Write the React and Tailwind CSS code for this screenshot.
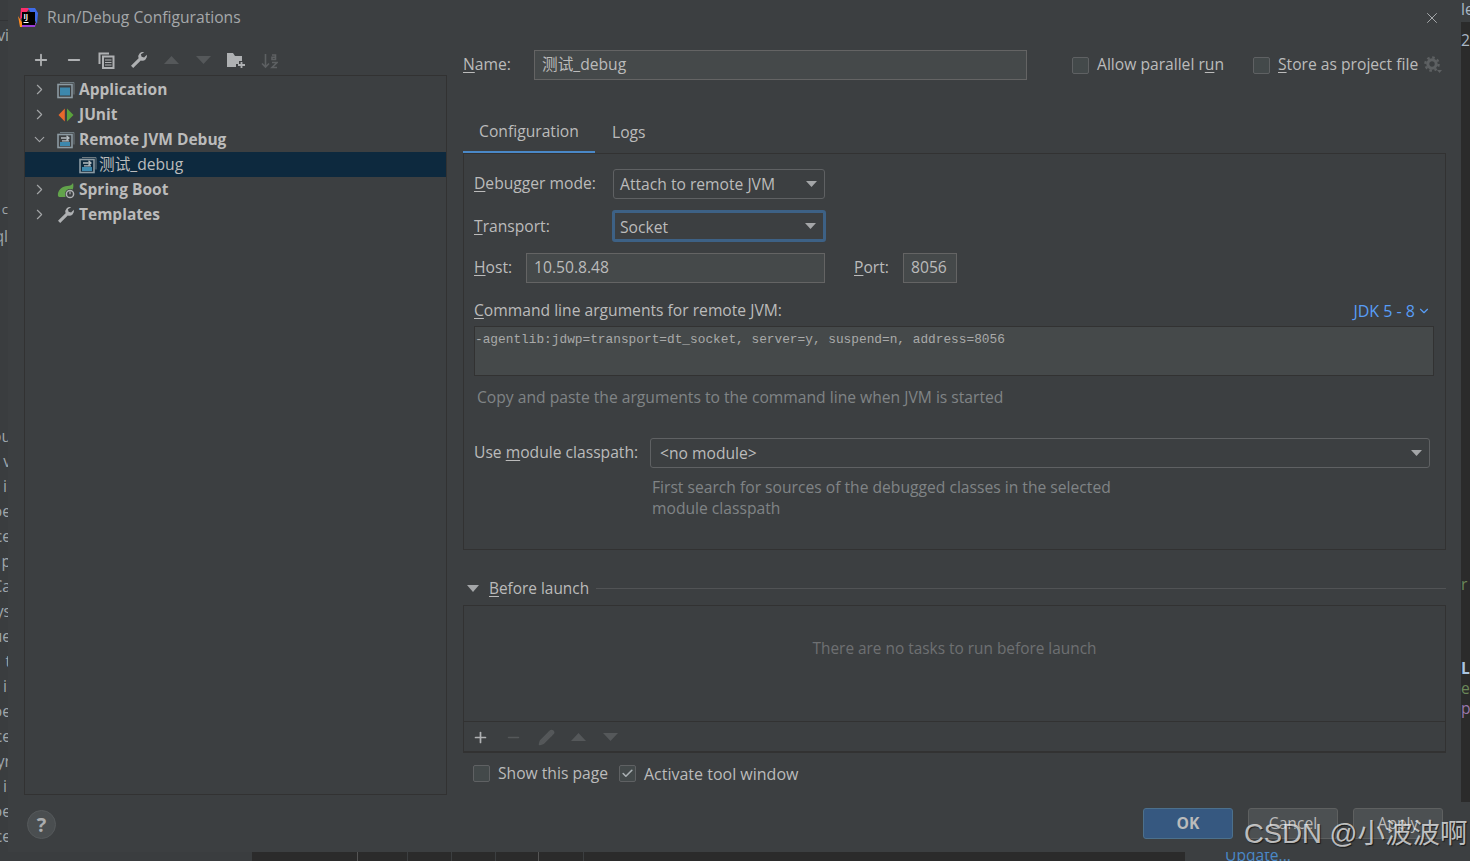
import { Plus, Minus, ChevronRight, ChevronDown, X, Check, Pencil } from 'lucide-react'

const ui = { fontFamily: '"Open Sans", "Noto Sans CJK SC", sans-serif' }

const tree = [
  { name: 'Application', icon: 'app', arrow: 'right' },
  { name: 'JUnit', icon: 'junit', arrow: 'right' },
  { name: 'Remote JVM Debug', icon: 'remote', arrow: 'down' },
  { name: '测试_debug', icon: 'remote', child: true },
  { name: 'Spring Boot', icon: 'spring', arrow: 'right' },
  { name: 'Templates', icon: 'wrench', arrow: 'right' },
]

const leftLines = ['ou', 'v', 'ii', 'oe', 'ce', 'p', 'Ca', 'ys', 'ue', 't', 'ii', 'oe', 'ce', 'yr', 'ii', 'oe', 'ce']

function Mn({ children }) {
  return <span className="underline underline-offset-2">{children}</span>
}

function WrenchIcon({ size = 18 }) {
  return (
    <svg width={size} height={size} viewBox="0 0 18 18">
      <path d="M14.200 1.200a4.600 4.600 0 0 0-5.600 6L1 14.800 3.200 17l7.600-7.600a4.600 4.600 0 0 0 6-5.600l-2.700 2.700-2.500-.7-.7-2.500z" fill="#afb1b3" />
    </svg>
  )
}

function GearIcon() {
  return (
    <svg width="18" height="18" viewBox="0 0 18 18" fill="none" stroke="#5d6062">
      <circle cx="8" cy="8" r="4.200" strokeWidth="3" />
      <circle cx="8" cy="8" r="6.600" strokeWidth="2.400" strokeDasharray="2.600 2.580" />
      <path d="M13 14h5l-2.500 3z" fill="#5d6062" stroke="none" />
    </svg>
  )
}

function TreeIcon({ type }) {
  if (type === 'app') {
    return (
      <svg width="18" height="18" viewBox="0 0 18 18">
        <path d="M3 1.500h14v12" fill="none" stroke="#6e7a80" strokeWidth="1" />
        <rect x="1" y="3.500" width="14" height="13" fill="none" stroke="#8c9aa2" strokeWidth="1.600" />
        <rect x="3" y="6.500" width="10" height="8" fill="#3d88ad" />
      </svg>
    )
  }
  if (type === 'junit') {
    return (
      <svg width="18" height="18" viewBox="0 0 18 18">
        <path d="M7.800 2.500v13L1.500 9z" fill="#e8692c" />
        <path d="M10 2.500v13L16.500 9z" fill="#5aa23c" />
      </svg>
    )
  }
  if (type === 'remote') {
    return (
      <svg width="18" height="18" viewBox="0 0 18 18">
        <path d="M3 1.500h14v12" fill="none" stroke="#6e7a80" strokeWidth="1" />
        <rect x="1" y="3.500" width="14" height="13" fill="none" stroke="#8c9aa2" strokeWidth="1.600" />
        <rect x="3" y="11" width="10" height="4" fill="#3d88ad" />
        <path d="M4 7h8M9.500 4.800l2.500 2.200-2.500 2.200M12 9.800H5" fill="none" stroke="#b4bcc0" strokeWidth="1.300" />
      </svg>
    )
  }
  if (type === 'spring') {
    return (
      <svg width="19" height="18" viewBox="0 0 19 18">
        <path d="M1 15c-1-6 5-10 9-10 3 0 5-1 6-3 1 4 0 7-2 8l-6 6H2z" fill="#62a34b" />
        <circle cx="13" cy="13" r="5" fill="#3c3f41" />
        <circle cx="13" cy="13" r="3.600" fill="none" stroke="#afb1b3" strokeWidth="1.500" />
        <path d="M13 10.500v2.700" stroke="#afb1b3" strokeWidth="1.200" />
      </svg>
    )
  }
  return <WrenchIcon />
}

function TreeRow({ item }) {
  return (
    <div className={`h-[25px] flex items-center ${item.child ? 'bg-[#0d293e] pl-[54px]' : 'pl-[6px]'}`}>
      {!item.child && (
        <span className="w-[26px] shrink-0 text-[#a4a6a8]">
          {item.arrow === 'down' ? <ChevronDown size={17} strokeWidth={1.6} /> : <ChevronRight size={17} strokeWidth={1.6} />}
        </span>
      )}
      <span className="w-[22px] shrink-0 flex items-center"><TreeIcon type={item.icon} /></span>
      <span className={`text-[#bbbbbb] whitespace-nowrap ${item.child ? 'text-[15.65px] -ml-[2px]' : 'text-[15.5px] font-bold'}`}>{item.name}</span>
    </div>
  )
}

function TopToolbar() {
  return (
    <div className="h-[30px] flex items-center text-[#afb1b3]">
      <span className="w-[33px] flex justify-center"><Plus size={18} strokeWidth={2.4} /></span>
      <span className="w-[33px] flex justify-center"><Minus size={18} strokeWidth={2.4} /></span>
      <span className="w-[32px] flex justify-center">
        <svg width="17" height="17" viewBox="0 0 17 17" fill="none" stroke="#afb1b3">
          <path d="M1.500 12V1.500H11" strokeWidth="2" />
          <rect x="5" y="4.500" width="10.500" height="11.500" strokeWidth="2" />
          <path d="M7 8h6.500M7 10.500h6.500M7 13h6.500" strokeWidth="1.200" />
        </svg>
      </span>
      <span className="w-[33px] flex justify-center"><WrenchIcon /></span>
      <span className="w-[32px] flex justify-center"><svg width="15" height="8" viewBox="0 0 15 8"><path d="M0 8L7.500 0 15 8z" fill="#55585a" /></svg></span>
      <span className="w-[33px] flex justify-center"><svg width="15" height="8" viewBox="0 0 15 8"><path d="M0 0l7.500 8L15 0z" fill="#55585a" /></svg></span>
      <span className="w-[33px] flex justify-center">
        <svg width="19" height="16" viewBox="0 0 19 16">
          <path d="M0 1h6l2 3h7v5h-3v3H9v3H0z" fill="#afb1b3" />
          <path d="M11 13h7M14.500 10v6" stroke="#afb1b3" strokeWidth="1.800" />
        </svg>
      </span>
      <span className="w-[32px] flex justify-center">
        <svg width="17" height="17" viewBox="0 0 17 17" fill="none" stroke="#5d6062" strokeWidth="1.600">
          <path d="M4.500 2v13M1 11.500l3.500 3.500L8 11.500" />
          <path d="M11 3h3.500v4.500H11V5.300h3.500M11 10.500h5l-5 5h5" />
        </svg>
      </span>
    </div>
  )
}

function Checkbox({ checked }) {
  return (
    <span className="w-[17px] h-[17px] shrink-0 rounded-[2px] border border-[#5f6163] bg-[#43494a] flex items-center justify-center">
      {checked && <Check size={13} strokeWidth={3} className="text-[#a9b0b3]" />}
    </span>
  )
}

function Combo({ text, focus, pad, className }) {
  return (
    <div className={`flex items-center justify-between rounded-[3px] bg-[#3c3f41] ${focus ? 'border-[3px] border-[#3d6185] pl-[5px] pr-[7px] h-[32px]' : 'border border-[#5f6163] pl-[6px] pr-[7px] h-[30px]'} ${className}`}>
      <span className={`text-[15.65px] text-[#bbbbbb] whitespace-nowrap ${focus ? 'pt-[3px]' : 'pt-[1px]'} ${pad ? 'ml-[3px]' : ''}`}>{text}</span>
      <svg width="11" height="6" viewBox="0 0 11 6"><path d="M0 0h11L5.500 6z" fill="#a4a6a8" /></svg>
    </div>
  )
}

function Field({ children, className }) {
  return (
    <div className={`h-[30px] flex items-center bg-[#45494a] border border-[#646464] pl-[7px] text-[15.65px] text-[#bbbbbb] whitespace-nowrap ${className}`}>{children}</div>
  )
}

function Btn({ children, primary }) {
  return (
    <div className={`w-[90px] h-[31px] rounded-[3px] flex items-center justify-center pt-[1px] text-[15.65px] ${primary ? 'bg-[#365880] border border-[#4c708c] font-bold text-[#bbbbbb]' : 'bg-[#4c5052] border border-[#5e6060] text-[#bbbbbb]'}`}>
      {children}
    </div>
  )
}

export default function App() {
  return (
    <div className="relative w-[1470px] h-[861px] overflow-hidden bg-[#2b2b2b] flex flex-col" style={ui}>
      <div className="flex h-[852px]">
        <div className="w-[8px] shrink-0 overflow-hidden bg-[#3a3d3f] text-[15.65px] text-[#9fa6ab] flex flex-col items-end">
          <div className="h-[21px] shrink-0 border-b border-[#323436] w-full" />
          <div className="h-[20px] shrink-0 leading-[20px] mt-[4px] -mr-[1px]">vi</div>
          <div className="mt-[155px] h-[20px] shrink-0 text-[13px]">c</div>
          <div className="h-[20px] mt-[5px] shrink-0">ql</div>
          <div className="mt-[179px] flex flex-col items-end -mr-[3px]">
            {leftLines.map((t, i) => <div key={i} className="h-[25px] shrink-0 leading-[25px]">{t}</div>)}
          </div>
        </div>

        <div className="w-[1453px] shrink-0 bg-[#3c3f41] flex flex-col">
          <div className="h-[35px] shrink-0 flex items-center pl-[10px] pr-[20px]">
            <svg width="20" height="20" viewBox="0 0 20 20" className="shrink-0">
              <path d="M3 0h9L2 12z" fill="#fc2d6c" />
              <path d="M10 0h7l3 5-1 11z" fill="#3e6be8" />
              <path d="M0 8l7 11H2z" fill="#ff8a1f" />
              <path d="M4 19h13l1-4H4z" fill="#9a3dd8" />
              <rect x="4" y="4" width="13" height="13" fill="#000" />
              <rect x="5.500" y="14" width="5" height="1" fill="#fff" />
              <text x="5.500" y="11" fontSize="7" fontWeight="700" fill="#fff">IJ</text>
            </svg>
            <span className="ml-[9px] pt-[1px] text-[15.65px] text-[#a5a8aa]">Run/Debug Configurations</span>
            <X size={18} strokeWidth={1.3} className="ml-auto text-[#a9acae]" />
          </div>

          <div className="flex-1 flex">
            <div className="w-[440px] shrink-0 pl-[16px] flex flex-col">
              <div className="h-[10px]" />
              <TopToolbar />
              <div className="w-[423px] h-[720px] border border-[#323232] pt-[1px]">
                {tree.map(item => <TreeRow key={item.name} item={item} />)}
              </div>
              <div className="mt-[15px] ml-[3px] w-[29px] h-[29px] rounded-full bg-[#4a4e50] border border-[#55595b] flex items-center justify-center text-[20px] font-bold text-[#a9acae]">?</div>
            </div>

            <div className="ml-[15px] w-[983px] flex flex-col text-[15.65px] text-[#bbbbbb]">
              <div className="h-[30px] mt-[15px] flex items-center">
                <span className="w-[71px]"><Mn>N</Mn>ame:</span>
                <Field className="w-[493px]">测试_debug</Field>
                <span className="ml-[45px]"><Checkbox /></span>
                <span className="ml-[8px] whitespace-nowrap">Allow parallel r<Mn>u</Mn>n</span>
                <span className="ml-[29px]"><Checkbox /></span>
                <span className="ml-[8px] whitespace-nowrap"><Mn>S</Mn>tore as project file</span>
                <span className="ml-[6px] w-[18px] h-[18px] shrink-0"><GearIcon /></span>
              </div>

              <div className="mt-[36px] h-[38px] flex">
                <div className="w-[132px] h-[38px] border-b-[3px] border-[#4a88c7] flex items-center justify-center pb-[3px]">Configuration</div>
                <div className="ml-[17px] h-[36px] flex items-center pb-[3px]">Logs</div>
              </div>

              <div className="h-[397px] border border-[#323232] pl-[10px] pr-[11px] pt-[15px] -mt-[1px]">
                <div className="flex items-center h-[30px]">
                  <span className="w-[139px]"><Mn>D</Mn>ebugger mode:</span>
                  <Combo text="Attach to remote JVM" className="w-[212px]" />
                </div>
                <div className="flex items-center h-[32px] mt-[11px]">
                  <span className="w-[138px] pt-[1px]"><Mn>T</Mn>ransport:</span>
                  <Combo text="Socket" focus className="w-[214px]" />
                </div>
                <div className="flex items-center h-[30px] mt-[11px]">
                  <span className="w-[52px]"><Mn>H</Mn>ost:</span>
                  <Field className="w-[299px]">10.50.8.48</Field>
                  <span className="ml-[29px] w-[49px]"><Mn>P</Mn>ort:</span>
                  <Field className="w-[54px]">8056</Field>
                </div>
                <div className="flex items-center justify-between h-[20px] mt-[18px]">
                  <span><Mn>C</Mn>ommand line arguments for remote JVM:</span>
                  <span className="flex items-center text-[16px] text-[#589df6] mr-[3px]">JDK 5 - 8<ChevronDown size={14} className="ml-[2px]" /></span>
                </div>
                <div className="h-[50px] mt-[5px] bg-[#45494a] border border-[#323232] text-[12.8px] leading-[26px] text-[#a9a9a9] whitespace-nowrap" style={{ fontFamily: '"Liberation Mono", monospace' }}>
                  -agentlib:jdwp=transport=dt_socket, server=y, suspend=n, address=8056
                </div>
                <div className="mt-[10px] h-[20px] ml-[3px] text-[#808486]">Copy and paste the arguments to the command line when JVM is started</div>
                <div className="flex items-center h-[30px] mt-[32px]">
                  <span className="w-[176px] whitespace-nowrap">Use <Mn>m</Mn>odule classpath:</span>
                  <Combo text="<no module>" pad className="w-[780px]" />
                </div>
                <div className="mt-[9px] ml-[178px] leading-[21px] text-[#808486]">
                  <div>First search for sources of the debugged classes in the selected</div>
                  <div>module classpath</div>
                </div>
              </div>

              <div className="mt-[28px] h-[20px] flex items-center">
                <svg width="12" height="7" viewBox="0 0 12 7" className="ml-[4px] shrink-0"><path d="M0 0h12L6 7z" fill="#a4a6a8" /></svg>
                <span className="ml-[10px] pt-[1px] text-[15.4px] whitespace-nowrap"><Mn>B</Mn>efore launch</span>
                <div className="ml-[7px] flex-1 h-[1px] bg-[#515355]" />
              </div>

              <div className="mt-[7px] h-[148px] border border-[#323232] border-b-2 flex flex-col">
                <div className="h-[116px] border-b border-[#323232] flex items-center justify-center text-[15.4px] text-[#6e7072] pb-[29px]">There are no tasks to run before launch</div>
                <div className="flex-1 flex items-center pl-[8px] pt-[1px]">
                  <span className="w-[33px]"><Plus size={17} strokeWidth={2.4} className="text-[#afb1b3]" /></span>
                  <span className="w-[33px]"><Minus size={17} strokeWidth={2.2} className="text-[#55585a]" /></span>
                  <span className="w-[33px]"><Pencil size={17} strokeWidth={2} className="text-[#55585a] fill-[#55585a]" /></span>
                  <span className="w-[32px]"><svg width="15" height="8" viewBox="0 0 15 8"><path d="M0 8L7.500 0 15 8z" fill="#55585a" /></svg></span>
                  <span className="w-[32px]"><svg width="15" height="8" viewBox="0 0 15 8"><path d="M0 0l7.500 8L15 0z" fill="#55585a" /></svg></span>
                </div>
              </div>

              <div className="mt-[12px] pl-[10px] h-[17px] flex items-center">
                <Checkbox />
                <span className="ml-[8px] pt-[1px] whitespace-nowrap">Show this page</span>
                <span className="ml-[11px]"><Checkbox checked /></span>
                <span className="ml-[8px] pt-[1px] text-[16px] whitespace-nowrap">Activate tool window</span>
              </div>

              <div className="mt-[26px] flex justify-end gap-[15px] mr-[3px]">
                <Btn primary>OK</Btn>
                <Btn>Cancel</Btn>
                <Btn>Apply</Btn>
              </div>
            </div>
          </div>
        </div>

        <div className="w-[9px] shrink-0 flex flex-col overflow-hidden text-[15.65px] text-[#a9b7c6]">
          <div className="h-[22px] bg-[#3c3f41] shrink-0 leading-[18px]">le</div>
          <div className="h-[20px] shrink-0 leading-[36px]">2</div>
          <div className="mt-[531px] h-[20px] shrink-0 text-[#6a8759]">r</div>
          <div className="mt-[64px] h-[20px] shrink-0 font-bold text-[#a9c4e0]">L</div>
          <div className="h-[20px] shrink-0 text-[#6a8759]">e</div>
          <div className="h-[20px] shrink-0 text-[#9876aa]">p</div>
          <div className="flex-1" />
          <div className="h-[50px] shrink-0 bg-[#3c3f41]" />
        </div>
      </div>

      <div className="h-[9px] flex overflow-hidden">
        <div className="w-[252px] shrink-0 bg-[#3a3d3f]" />
        <div className="w-[106px] shrink-0 border-r border-[#555555]" />
        <div className="w-[50px] shrink-0 border-r border-[#3c3f41]" />
        <div className="w-[44px] shrink-0 border-r border-[#3c3f41]" />
        <div className="w-[44px] shrink-0 border-r border-[#3c3f41]" />
        <div className="w-[43px] shrink-0 border-r border-[#555555]" />
        <div className="w-[45px] shrink-0 border-r border-[#3c3f41]" />
        <div className="w-[601px] shrink-0" />
        <div className="flex-1 bg-[#3c3f41] pl-[40px] text-[15.65px] leading-[6px] text-[#4a88c7] whitespace-nowrap">Update...</div>
      </div>

      <div className="absolute left-[1244px] top-[816px] text-[27.5px] leading-[36px] text-white/70 whitespace-nowrap [text-shadow:1px_1px_1px_rgba(0,0,0,0.6)]" style={{ fontFamily: '"Liberation Sans", "Noto Sans CJK SC", sans-serif' }}>
        CSDN @小波波啊
      </div>
    </div>
  )
}
